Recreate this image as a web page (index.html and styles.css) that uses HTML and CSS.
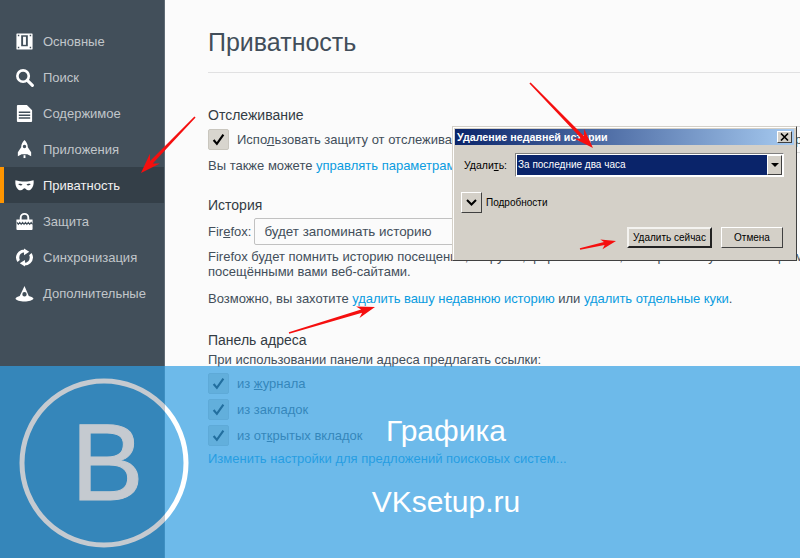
FILE: index.html
```html
<!DOCTYPE html>
<html lang="ru">
<head>
    <meta charset="UTF-8">
    <title>Приватность</title>
    <link rel="stylesheet" href="styles.css">
</head>
<body>
    <div class="app">
        <aside class="sidebar">
            <ul class="nav">
                <li><svg viewBox="0 0 20 20"><path fill-rule="evenodd" d="M2 1.500h16a.5.5 0 0 1 .5.5v16a.5.5 0 0 1-.5.5H2a.5.5 0 0 1-.5-.5V2a.5.5 0 0 1 .5-.5zM6.500 3.500V15h7V3.500zM3 3v1.500h1.500V3zM15.500 3v1.500H17V3zM3 15.500V17h1.500v-1.500zM15.500 15.500V17H17v-1.500z"/><rect x="8.500" y="5" width="3" height="8.500"/></svg>Основные</li>
                <li><svg viewBox="0 0 20 20"><circle cx="8.500" cy="8.500" r="6" fill="none" stroke="#fff" stroke-width="2.800"/><path d="M13 13l5.300 5.300" fill="none" stroke="#fff" stroke-width="3.200" stroke-linecap="round"/></svg>Поиск</li>
                <li><svg viewBox="0 0 20 20"><path fill-rule="evenodd" d="M3 1h9.500L18 6.500V18a1 1 0 0 1-1 1H3a1 1 0 0 1-1-1V2a1 1 0 0 1 1-1zM4 8v1.500h12V8zM4 11v1.500h12V11zM4 14v1.500h12V14z"/></svg>Содержимое</li>
                <li><svg viewBox="0 0 20 20"><path fill-rule="evenodd" d="M10 0c2 2 3.500 4.500 3.500 7.500l3.500 5.500v4l-4-2H7l-4 2v-4l3.500-5.500C6.500 4.500 8 2 10 0zM10 5a1.800 1.800 0 1 0 0 3.600A1.800 1.800 0 0 0 10 5z"/><rect x="9" y="16" width="2" height="3"/></svg>Приложения</li>
                <li class="active"><svg viewBox="0 0 20 20"><path fill-rule="evenodd" d="M.5 4.500c3 1 6.500 1.300 9.500 1.300s6.500-.3 9.500-1.300c.8 5-1.500 10.500-5.500 10.500-2 0-3-2.200-4-2.200s-2 2.200-4 2.200C2 15-.3 9.500.5 4.500zM3.500 8.500c1 1.800 3.200 1.800 4.500.8C7 8 5 7.800 3.500 8.500zM16.500 8.500C15 7.800 13 8 12 9.300c1.300 1 3.500 1 4.500-.8z"/></svg>Приватность</li>
                <li><svg viewBox="0 0 20 20"><path fill-rule="evenodd" d="M5 8V6a5 5 0 0 1 10 0v2h3.500v10a1 1 0 0 1-1 1h-15a1 1 0 0 1-1-1V8zM7 8h6V6a3 3 0 0 0-6 0z"/><path d="M2 11l1.500 2 1.500-2 1.500 2 1.500-2 1.500 2 1.500-2 1.500 2 1.500-2 1.500 2 1.500-2 1.500 2" fill="none" stroke="#424f5a" stroke-width="1.200"/></svg>Защита</li>
                <li><svg viewBox="0 0 20 20"><path d="M10 1.500v3a5.500 5.500 0 0 0-5.500 5.500c0 1 .2 1.800.6 2.500l-2.400 2.300A9 9 0 0 1 1 10a9 9 0 0 1 9-8.500zM9.500 .5l5.500 3.500-5.500 3.500z"/><path d="M10 18.500v-3a5.500 5.500 0 0 0 5.500-5.500c0-1-.2-1.800-.6-2.500l2.400-2.300A9 9 0 0 1 19 10a9 9 0 0 1-9 8.500zM10.500 19.500L5 16l5.500-3.500z"/></svg>Синхронизация</li>
                <li><svg viewBox="0 0 20 20"><path fill-rule="evenodd" d="M11 0l-1 2 4.500 10.500c2 .5 4.500 1.500 5 3-1 1.500-5 3-9.500 3S1 17 .5 15.500c.5-1.500 2.500-2.500 4.500-3zM10 8.500a2.300 2.300 0 1 0 0 4.600 2.300 2.300 0 0 0 0-4.600z"/></svg>Дополнительные</li>
            </ul>
        </aside>

        <main class="content">
            <h1>Приватность</h1>

            <h2 class="first">Отслеживание</h2>
            <div class="check-row">
                <span class="checkbox"><svg viewBox="0 0 12 12"><path d="M1.500 6.500l3 3.500 6-8.500" fill="none" stroke="#000" stroke-width="2"/></svg></span>
                <span class="line">Испо<u>л</u>ьзовать защиту от отслеживания в приватных окнах</span>
                <span class="more">р</span>
            </div>
            <p class="note">Вы также можете <a>управлять параметрами блокировки и защиты от отслеживания</a></p>

            <h2 class="history">История</h2>
            <div class="select-row">
                <span>Fir<u>e</u>fox:</span>
                <div class="select">будет запоминать историю</div>
            </div>
            <p class="desc">Firefox будет помнить историю посещений, загрузок, форм и поиска, и сохранять куки с посещаемых<br>посещёнными вами веб-сайтами.</p>
            <p class="maybe">Возможно, вы захотите <a>удалить вашу недавнюю историю</a> или <a>удалить отдельные куки</a>.</p>

            <h2 class="address">Панель адреса</h2>
            <p class="hint">При использовании панели адреса предлагать ссылки:</p>
            <div class="check-row tight">
                <span class="checkbox"><svg viewBox="0 0 12 12"><path d="M1.500 6.500l3 3.500 6-8.500" fill="none" stroke="#000" stroke-width="2"/></svg></span>
                <span class="line">из <u>ж</u>урнала</span>
            </div>
            <div class="check-row tight">
                <span class="checkbox"><svg viewBox="0 0 12 12"><path d="M1.500 6.500l3 3.500 6-8.500" fill="none" stroke="#000" stroke-width="2"/></svg></span>
                <span class="line">из закла<u>д</u>ок</span>
            </div>
            <div class="check-row tight">
                <span class="checkbox"><svg viewBox="0 0 12 12"><path d="M1.500 6.500l3 3.500 6-8.500" fill="none" stroke="#000" stroke-width="2"/></svg></span>
                <span class="line">из от<u>к</u>рытых вкладок</span>
            </div>
            <p class="engines"><a>Изменить настройки для предложений поисковых систем...</a></p>
        </main>
    </div>

    <div class="dialog">
        <div class="titlebar">
            <span>Удаление недавней истории</span>
            <span class="close"><svg viewBox="0 0 9 8" width="9" height="8"><path d="M1 .5l7 7M8 .5l-7 7" fill="none" stroke="#000" stroke-width="1.600"/></svg></span>
        </div>
        <div class="dialog-row">
            <span class="dlabel">Удали<u>т</u>ь:</span>
            <div class="combo">
                <span class="combo-value">За последние два часа</span>
                <span class="combo-btn"><i class="tri"></i></span>
            </div>
        </div>
        <div class="details">
            <span class="expand"><svg viewBox="0 0 11 7" width="11" height="7"><path d="M1 1l4.500 4.500L10 1" fill="none" stroke="#000" stroke-width="2"/></svg></span>
            <span>Подробности</span>
        </div>
        <div class="dialog-buttons">
            <span class="btn default">Удалить сейчас</span>
            <span class="btn">Отмена</span>
        </div>
    </div>

    <svg class="arrows" viewBox="0 0 800 558">
        <path d="M195.600 117.600L152.700 163.400 159.900 163.500 141 173 149.900 153.700 150.100 161 194.400 116.400z"/>
        <path d="M530.600 82.400L583.900 135.900 584.100 128.700 593 148 574.100 138.500 581.300 138.500 529.400 83.600z"/>
        <path d="M580.200 249.700L604.600 245.100 602.500 249.200 616 241 600.300 239.400 604 242.100 579.800 248.300z"/>
        <path d="M289.200 333.800L362.100 312.800 359.500 318 375 307 356.100 306.500 361.100 309.400 288.800 332.200z"/>
    </svg>

    <div class="banner">
        <svg class="ring" viewBox="0 0 176 176" width="176" height="176">
            <defs>
                <linearGradient id="ringfill" gradientUnits="userSpaceOnUse" x1="0" y1="0" x2="176" y2="0">
                    <stop offset="0.847" stop-color="#c5cad0"/>
                    <stop offset="0.847" stop-color="#fff"/>
                </linearGradient>
            </defs>
            <circle cx="88" cy="88" r="82" fill="none" stroke="url(#ringfill)" stroke-width="5"/>
        </svg>
        <span class="logo-b">B</span>
        <div class="banner-text">
            <span>Графика</span>
            <span>VKsetup.ru</span>
        </div>
    </div>
</body>
</html>
```

FILE: styles.css
```css
html, body {
    margin: 0;
    padding: 0;
    height: 558px;
    overflow: hidden;
}
body {
    position: relative;
    font-family: "Liberation Sans", Arial, sans-serif;
    font-size: 13px;
    color: #424e5a;
    background-color: #fbfbfb;
}
.app {
    display: flex;
    height: 558px;
}
.sidebar {
    width: 164px;
    flex: none;
    background-color: #424f5a;
    border-right: 1px solid #5f6b75;
}
.nav {
    list-style: none;
    margin: 0;
    padding: 23px 0 0;
}
.nav li {
    display: flex;
    align-items: center;
    gap: 9px;
    height: 36px;
    padding-left: 15px;
    color: #c1c6ca;
}
.nav svg {
    width: 19px;
    height: 19px;
    fill: #fff;
}
.nav .active {
    padding-left: 11px;
    border-left: 4px solid #ff9500;
    background-color: #343f48;
    color: #f1f1f1;
}
.content {
    flex: 1;
    min-width: 0;
    padding-left: 43px;
    overflow: hidden;
    white-space: nowrap;
}
.content a {
    color: #0a9be0;
}
h1 {
    margin: 0;
    padding: 27px 0 14px;
    border-bottom: 1px solid #e1e1e2;
    font-size: 25px;
    line-height: 31px;
    font-weight: normal;
    color: #424e5a;
}
h2 {
    margin: 0;
    font-size: 14px;
    line-height: 18px;
    font-weight: normal;
    color: #333c44;
}
p {
    margin: 0;
    line-height: 15px;
}
.first {
    margin-top: 33px;
}
.check-row {
    display: flex;
    align-items: center;
    gap: 8px;
    margin-top: 5px;
}
.checkbox {
    display: flex;
    align-items: center;
    justify-content: center;
    width: 19px;
    height: 19px;
    border: 1px solid #c9c6be;
    border-radius: 2px;
    background-color: #d8d5ce;
}
.checkbox svg {
    width: 13px;
    height: 13px;
}
.more {
    margin: -3px 0 -3px auto;
    width: 5px;
    height: 25px;
    line-height: 25px;
    border: 1px solid #dcdcdc;
    border-right: 0;
    overflow: hidden;
}
.note {
    margin-top: 8px;
}
.history {
    margin-top: 23px;
}
.select-row {
    display: flex;
    align-items: center;
    gap: 3px;
    margin-top: 4px;
}
.select {
    width: 300px;
    height: 25px;
    padding-left: 9px;
    border: 1px solid #c1c1c1;
    border-radius: 2px;
    background-color: #fbfbfb;
    font-size: 13.400px;
    line-height: 25px;
}
.desc {
    margin-top: 4px;
}
.maybe {
    margin-top: 12px;
}
.maybe a {
    letter-spacing: -0.05px;
}
.address {
    margin-top: 25px;
}
.hint {
    margin-top: 3px;
}
.hint + .check-row {
    margin-top: 6px;
}
.engines {
    margin-top: 5px;
}

.dialog {
    position: absolute;
    left: 452px;
    top: 126px;
    width: 339px;
    height: 129px;
    padding: 2px;
    border: 1px solid #d4d0c8;
    border-right-color: #404040;
    border-bottom-color: #404040;
    background-color: #d4d0c8;
    box-shadow: inset 1px 1px 0 #fff;
    font-size: 10px;
    color: #000;
}
.titlebar {
    display: flex;
    align-items: center;
    justify-content: space-between;
    height: 16px;
    padding: 0 2px;
    background: linear-gradient(to right, #0a246a, #a6caf0);
    color: #fff;
    font-weight: bold;
    font-size: 10.700px;
}
.close {
    display: flex;
    align-items: center;
    justify-content: center;
    width: 15px;
    height: 12px;
    background-color: #d4d0c8;
    border: 1px solid;
    border-color: #fff #404040 #404040 #fff;
    box-sizing: border-box;
}
.dialog-row {
    display: flex;
    align-items: center;
    gap: 8px;
    margin: 8px 0 0 9px;
    font-size: 10.500px;
}
.combo {
    display: flex;
    align-items: stretch;
    width: 265px;
    height: 20px;
    padding: 1px;
    border: 1px solid;
    border-color: #808080 #fff #fff #808080;
    background-color: #fff;
    font-size: 10px;
}
.combo-value {
    flex: 1;
    padding-left: 1px;
    background-color: #0a246a;
    color: #fff;
    line-height: 20px;
}
.combo-btn {
    display: flex;
    align-items: center;
    justify-content: center;
    width: 13px;
    background-color: #d4d0c8;
    border: 1px solid;
    border-color: #fff #404040 #404040 #fff;
}
.tri {
    width: 0;
    height: 0;
    border: 4px solid transparent;
    border-top-color: #000;
    border-bottom-width: 0;
}
.details {
    display: flex;
    align-items: center;
    gap: 4px;
    margin: 15px 0 0 6px;
}
.expand {
    display: flex;
    align-items: center;
    justify-content: center;
    box-sizing: border-box;
    width: 21px;
    height: 21px;
    background-color: #d4d0c8;
    border: 1px solid;
    border-color: #fff #404040 #404040 #fff;
}
.dialog-buttons {
    display: flex;
    justify-content: flex-end;
    gap: 9px;
    margin: 14px 11px 0 0;
}
.btn {
    display: flex;
    align-items: center;
    justify-content: center;
    box-sizing: border-box;
    width: 62px;
    height: 21px;
    background-color: #d4d0c8;
    border: 1px solid;
    border-color: #fff #404040 #404040 #fff;
}
.btn.default {
    width: 85px;
    border: 2px solid;
    border-color: #f4f3f0 #222 #222 #f4f3f0;
}

.arrows {
    position: absolute;
    left: 0;
    top: 0;
    width: 800px;
    height: 558px;
    fill: #f50f0f;
}

.banner {
    position: absolute;
    left: 0;
    top: 366px;
    width: 800px;
    height: 192px;
    background-color: rgba(48, 158, 227, 0.7);
}
.ring {
    position: absolute;
    left: 16px;
    top: 9px;
}
.logo-b {
    position: absolute;
    left: 71px;
    top: 34px;
    font-size: 109px;
    line-height: 125px;
    color: #c5cad0;
    -webkit-text-stroke: 1px #c5cad0;
}
.banner-text {
    position: absolute;
    left: 346px;
    top: 47px;
    width: 200px;
    display: flex;
    flex-direction: column;
    align-items: center;
    gap: 35px;
    color: #fff;
    font-size: 30px;
    line-height: 36px;
}
```
